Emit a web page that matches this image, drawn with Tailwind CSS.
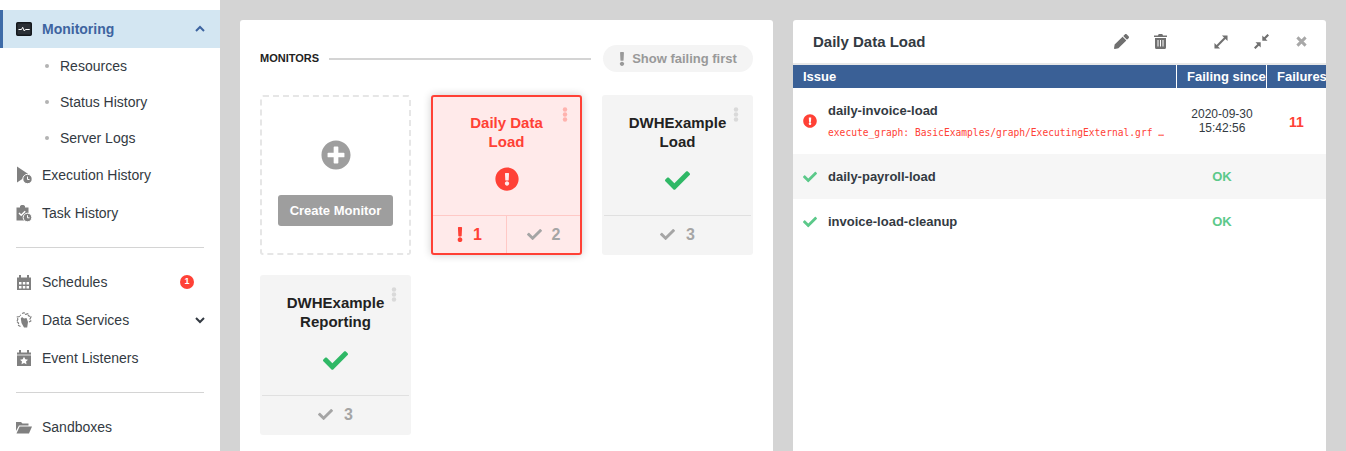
<!DOCTYPE html>
<html lang="en">
<head>
    <meta charset="UTF-8">
    <title>Monitoring</title>
    <script src="https://cdn.jsdelivr.net/npm/@tailwindcss/browser@4"></script>
</head>
<body class="overflow-hidden">
<div class="flex h-[451px] w-[1346px] overflow-hidden bg-[#d4d4d4] font-['Liberation_Sans',Arial,sans-serif] text-[14px] text-[#333a42]">

    <!-- Sidebar -->
    <aside class="w-[220px] shrink-0 bg-white pt-[10px]">
        <div class="flex h-[38px] items-center border-l-[3px] border-[#3d6ba8] bg-[#d3e6f2] pl-[13px] pr-[15px]">
            <svg class="h-[14px] w-[16px] shrink-0" viewBox="0 0 16 14"><rect x="0.75" y="0.75" width="14.5" height="12.5" rx="1" fill="#2b3036" stroke="#14181d" stroke-width="1.5"/><path d="M2.5 7.500h3l1.200-2.200 1.600 3.700 1.200-1.500h4.200" fill="none" stroke="#fff" stroke-width="1"/></svg>
            <span class="ml-[10px] font-bold text-[#3d64a0]">Monitoring</span>
            <svg class="ml-auto h-[10px] w-[10px]" viewBox="0 0 10 10"><path d="M1 7l4-4 4 4" fill="none" stroke="#3d64a0" stroke-width="2"/></svg>
        </div>
        <div class="flex h-[36px] items-center pl-[45px]"><span class="h-[4px] w-[4px] rounded-full bg-[#b3b3b3]"></span><span class="ml-[11px]">Resources</span></div>
        <div class="flex h-[36px] items-center pl-[45px]"><span class="h-[4px] w-[4px] rounded-full bg-[#b3b3b3]"></span><span class="ml-[11px]">Status History</span></div>
        <div class="flex h-[36px] items-center pl-[45px]"><span class="h-[4px] w-[4px] rounded-full bg-[#b3b3b3]"></span><span class="ml-[11px]">Server Logs</span></div>
        <div class="flex h-[38px] items-center pl-[16px]">
            <svg class="h-[18px] w-[16px] shrink-0" viewBox="0 0 16 18"><path d="M1 0.500l12 8-12 8z" fill="#808080"/><circle cx="11.500" cy="13" r="4.700" fill="#808080" stroke="#fff"/><path d="M11.500 10.500v3h2" fill="none" stroke="#fff"/></svg>
            <span class="ml-[10px]">Execution History</span>
        </div>
        <div class="flex h-[38px] items-center pl-[16px]">
            <svg class="h-[17px] w-[16px] shrink-0" viewBox="0 0 16 17"><path d="M0.500 2.500h3.500V1l1.500-1h2l1.500 1v1.500h3.500v13h-12z" fill="#808080"/><path d="M3 8l2.200 2.200 4-4" fill="none" stroke="#fff" stroke-width="1.500"/><circle cx="11.500" cy="12.500" r="4.300" fill="#808080" stroke="#fff"/><path d="M11.500 10.200v2.600h2" fill="none" stroke="#fff"/></svg>
            <span class="ml-[10px]">Task History</span>
        </div>
        <div class="mx-[16px] mb-[15px] mt-[15px] h-px bg-[#d4d4d4]"></div>
        <div class="flex h-[38px] items-center pl-[17px] pr-[26px]">
            <svg class="h-[15px] w-[14px] shrink-0" viewBox="0 0 14 15"><path d="M0 2.500h14V15H0z" fill="#808080"/><path d="M3 0v3M11 0v3" stroke="#808080" stroke-width="2"/><path d="M2 7h2.500v2.500H2zM5.800 7h2.500v2.500H5.800zM9.500 7h2.500v2.500H9.500zM2 11h2.500v2.500H2zM5.800 11h2.500v2.500H5.800zM9.500 11h2.500v2.500H9.500z" fill="#fff"/></svg>
            <span class="ml-[11px]">Schedules</span>
            <span class="ml-auto flex h-[14px] w-[14px] items-center justify-center rounded-full bg-[#ff4136] text-[9px] font-bold text-white">1</span>
        </div>
        <div class="flex h-[38px] items-center pl-[16px] pr-[15px]">
            <svg class="h-[16px] w-[16px] shrink-0" viewBox="0 0 16 16"><path d="M6 1.500L8 .8l1.500 1.500 2.300-.5.700 2 2.500 1-1 2.200.8 2-1.800 1M4.500 14.500l-2-1V11L.8 9.500l1-2-.5-2.500 2.200-.5L4.800 2.800" fill="none" stroke="#808080" stroke-width="1.200" stroke-dasharray="3 .8"/><path d="M4.800 6.500L6 5l2 1.500 2.500-.5 1.500 4-.8 5.500H8L5.500 11z" fill="#808080"/></svg>
            <span class="ml-[10px]">Data Services</span>
            <svg class="ml-auto h-[10px] w-[10px]" viewBox="0 0 10 10"><path d="M1 3l4 4 4-4" fill="none" stroke="#333a42" stroke-width="2"/></svg>
        </div>
        <div class="flex h-[38px] items-center pl-[17px]">
            <svg class="h-[16px] w-[14px] shrink-0" viewBox="0 0 14 16"><path d="M0 2.500h14V16H0z" fill="#808080"/><path d="M3 0v3M11 0v3" stroke="#808080" stroke-width="2"/><path d="M0 5h14" stroke="#fff" stroke-width=".8"/><path d="M7 6.800l1.300 2.500 2.700.4-2 1.900.5 2.700L7 13l-2.500 1.300.5-2.700-2-1.900 2.700-.4z" fill="#fff"/></svg>
            <span class="ml-[11px]">Event Listeners</span>
        </div>
        <div class="mx-[16px] mb-[15px] mt-[15px] h-px bg-[#d4d4d4]"></div>
        <div class="flex h-[38px] items-center pl-[16px]">
            <svg class="h-[13px] w-[16px] shrink-0" viewBox="0 0 16 13"><path d="M0 1h5l1.500 1.500h6V4.500H3L0 10z" fill="#808080"/><path d="M3.600 5.500H16l-3 7H0.500z" fill="#808080"/></svg>
            <span class="ml-[10px]">Sandboxes</span>
        </div>
    </aside>

    <!-- Monitors -->
    <main class="ml-[20px] mt-[20px] h-[500px] w-[533px] shrink-0 rounded-t-[3px] bg-white px-[20px] pt-[25px]">
        <div class="flex h-[27px] items-center">
            <span class="text-[11px] font-bold leading-none text-[#222]">MONITORS</span>
            <span class="ml-[10px] h-[2px] w-[262px] bg-[#d4d4d4]"></span>
            <span class="ml-auto flex h-[27px] w-[150px] items-center justify-center rounded-full bg-[#f4f4f4] text-[13px] font-bold text-[#999]">
                <svg class="h-[14px] w-[6px]" viewBox="0 0 192 512"><path fill="#999" d="M176 432c0 44.112-35.888 80-80 80s-80-35.888-80-80 35.888-80 80-80 80 35.888 80 80zM25.260 25.199l13.600 272C39.499 309.972 50.041 320 62.830 320h66.340c12.789 0 23.331-10.028 23.970-22.801l13.600-272C167.425 11.490 156.496 0 142.770 0H49.230C35.504 0 24.575 11.490 25.260 25.199z"/></svg>
                <span class="ml-[7px]">Show failing first</span>
            </span>
        </div>

        <div class="mt-[23px] grid grid-cols-[151px_151px_151px] gap-[20px]">
            <!-- create -->
            <div class="flex h-[160px] flex-col items-center rounded-[3px] border-2 border-dashed border-[#e6e6e6] pt-[43px]">
                <svg class="h-[30px] w-[30px]" viewBox="0 0 512 512"><path fill="#9e9e9e" d="M256 8C119 8 8 119 8 256s111 248 248 248 248-111 248-248S393 8 256 8zm144 276c0 6.600-5.400 12-12 12h-92v92c0 6.600-5.400 12-12 12h-56c-6.600 0-12-5.400-12-12v-92h-92c-6.600 0-12-5.400-12-12v-56c0-6.600 5.400-12 12-12h92v-92c0-6.600 5.400-12 12-12h56c6.600 0 12 5.400 12 12v92h92c6.600 0 12 5.400 12 12v56z"/></svg>
                <span class="mt-[25px] flex h-[31px] w-[115px] items-center justify-center rounded-[3px] bg-[#9e9e9e] text-[13px] font-bold text-white">Create Monitor</span>
            </div>

            <!-- failing -->
            <div class="relative flex h-[160px] flex-col rounded-[3px] border-2 border-[#ff4136] bg-[#ffeaea] shadow-[0_0_8px_rgba(0,0,0,0.2)]">
                <svg class="absolute right-[12px] top-[10px] h-[15px] w-[6px]" viewBox="0 0 6 15"><circle cx="3" cy="2.500" r="2.200" fill="#ffb3ae"/><circle cx="3" cy="7.500" r="2.200" fill="#ffb3ae"/><circle cx="3" cy="12.500" r="2.200" fill="#ffb3ae"/></svg>
                <div class="mt-[16px] text-center text-[15px] font-bold leading-[19px] text-[#ff4136]">Daily Data<br>Load</div>
                <svg class="mx-auto mt-[16px] h-[24px] w-[24px]" viewBox="0 0 512 512"><path fill="#ff4136" d="M504 256c0 136.997-111.043 248-248 248S8 392.997 8 256C8 119.083 119.043 8 256 8s248 111.083 248 248zm-248 50c-25.405 0-46 20.595-46 46s20.595 46 46 46 46-20.595 46-46-20.595-46-46-46zm-43.673-165.346l7.418 136c.347 6.364 5.609 11.346 11.982 11.346h48.546c6.373 0 11.635-4.982 11.982-11.346l7.418-136c.375-6.874-5.098-12.654-11.982-12.654h-63.383c-6.884 0-12.356 5.780-11.981 12.654z"/></svg>
                <div class="mt-auto flex h-[38px] border-t border-[#ffc9c6] text-[16px] font-bold">
                    <div class="flex flex-1 items-center justify-center border-r border-[#ffc9c6] text-[#ff4136]">
                        <svg class="h-[15px] w-[6px]" viewBox="0 0 192 512"><path fill="#ff4136" d="M176 432c0 44.112-35.888 80-80 80s-80-35.888-80-80 35.888-80 80-80 80 35.888 80 80zM25.260 25.199l13.600 272C39.499 309.972 50.041 320 62.830 320h66.340c12.789 0 23.331-10.028 23.970-22.801l13.600-272C167.425 11.490 156.496 0 142.770 0H49.230C35.504 0 24.575 11.490 25.260 25.199z"/></svg>
                        <span class="ml-[10px]">1</span>
                    </div>
                    <div class="flex flex-1 items-center justify-center text-[#a5a5a5]">
                        <svg class="h-[15px] w-[15px]" viewBox="0 0 512 512"><path fill="#a5a5a5" d="M173.898 439.404l-166.400-166.400c-9.997-9.997-9.997-26.206 0-36.204l36.203-36.204c9.997-9.998 26.207-9.998 36.204 0L192 312.690 432.095 72.596c9.997-9.997 26.207-9.997 36.204 0l36.203 36.204c9.997 9.997 9.997 26.206 0 36.204l-294.400 294.401c-9.998 9.997-26.207 9.997-36.204-.001z"/></svg>
                        <span class="ml-[10px]">2</span>
                    </div>
                </div>
            </div>

            <!-- ok -->
            <div class="relative flex h-[160px] flex-col rounded-[3px] bg-[#f4f4f4] px-[2px] pb-[2px]">
                <svg class="absolute right-[14px] top-[12px] h-[15px] w-[6px]" viewBox="0 0 6 15"><circle cx="3" cy="2.500" r="2.200" fill="#d9d9d9"/><circle cx="3" cy="7.500" r="2.200" fill="#d9d9d9"/><circle cx="3" cy="12.500" r="2.200" fill="#d9d9d9"/></svg>
                <div class="mt-[18px] text-center text-[15px] font-bold leading-[19px] text-[#222]">DWHExample<br>Load</div>
                <svg class="mx-auto mt-[17px] h-[25px] w-[25px]" viewBox="0 0 512 512"><path fill="#2fb866" d="M173.898 439.404l-166.400-166.400c-9.997-9.997-9.997-26.206 0-36.204l36.203-36.204c9.997-9.998 26.207-9.998 36.204 0L192 312.690 432.095 72.596c9.997-9.997 26.207-9.997 36.204 0l36.203 36.204c9.997 9.997 9.997 26.206 0 36.204l-294.400 294.401c-9.998 9.997-26.207 9.997-36.204-.001z"/></svg>
                <div class="mt-auto flex h-[38px] items-center justify-center border-t border-[#e0e0e0] text-[16px] font-bold text-[#a5a5a5]">
                    <svg class="h-[15px] w-[15px]" viewBox="0 0 512 512"><path fill="#a5a5a5" d="M173.898 439.404l-166.400-166.400c-9.997-9.997-9.997-26.206 0-36.204l36.203-36.204c9.997-9.998 26.207-9.998 36.204 0L192 312.690 432.095 72.596c9.997-9.997 26.207-9.997 36.204 0l36.203 36.204c9.997 9.997 9.997 26.206 0 36.204l-294.400 294.401c-9.998 9.997-26.207 9.997-36.204-.001z"/></svg>
                    <span class="ml-[11px]">3</span>
                </div>
            </div>

            <div class="relative flex h-[160px] flex-col rounded-[3px] bg-[#f4f4f4] px-[2px] pb-[2px]">
                <svg class="absolute right-[14px] top-[12px] h-[15px] w-[6px]" viewBox="0 0 6 15"><circle cx="3" cy="2.500" r="2.200" fill="#d9d9d9"/><circle cx="3" cy="7.500" r="2.200" fill="#d9d9d9"/><circle cx="3" cy="12.500" r="2.200" fill="#d9d9d9"/></svg>
                <div class="mt-[18px] text-center text-[15px] font-bold leading-[19px] text-[#222]">DWHExample<br>Reporting</div>
                <svg class="mx-auto mt-[17px] h-[25px] w-[25px]" viewBox="0 0 512 512"><path fill="#2fb866" d="M173.898 439.404l-166.400-166.400c-9.997-9.997-9.997-26.206 0-36.204l36.203-36.204c9.997-9.998 26.207-9.998 36.204 0L192 312.690 432.095 72.596c9.997-9.997 26.207-9.997 36.204 0l36.203 36.204c9.997 9.997 9.997 26.206 0 36.204l-294.400 294.401c-9.998 9.997-26.207 9.997-36.204-.001z"/></svg>
                <div class="mt-auto flex h-[38px] items-center justify-center border-t border-[#e0e0e0] text-[16px] font-bold text-[#a5a5a5]">
                    <svg class="h-[15px] w-[15px]" viewBox="0 0 512 512"><path fill="#a5a5a5" d="M173.898 439.404l-166.400-166.400c-9.997-9.997-9.997-26.206 0-36.204l36.203-36.204c9.997-9.998 26.207-9.998 36.204 0L192 312.690 432.095 72.596c9.997-9.997 26.207-9.997 36.204 0l36.203 36.204c9.997 9.997 9.997 26.206 0 36.204l-294.400 294.401c-9.998 9.997-26.207 9.997-36.204-.001z"/></svg>
                    <span class="ml-[11px]">3</span>
                </div>
            </div>
        </div>
    </main>

    <!-- Detail -->
    <section class="ml-[20px] mt-[20px] h-[500px] w-[533px] shrink-0 overflow-hidden rounded-t-[3px] bg-white">
        <div class="flex h-[43px] items-center pl-[20px]">
            <span class="mt-[2px] text-[15px] font-bold text-[#333a42]">Daily Data Load</span>
            <svg class="ml-[188px] h-[15px] w-[15px]" viewBox="0 0 512 512"><path fill="#707070" d="M497.900 142.100l-46.100 46.100c-4.700 4.700-12.300 4.700-17 0l-111-111c-4.700-4.700-4.700-12.300 0-17l46.100-46.100c18.700-18.700 49.100-18.700 67.900 0l60.100 60.100c18.800 18.700 18.800 49.100 0 67.900zM284.200 99.800L21.600 362.400.4 483.900c-2.900 16.400 11.400 30.600 27.800 27.800l121.500-21.300 262.600-262.600c4.700-4.700 4.700-12.300 0-17l-111-111c-4.800-4.700-12.400-4.700-17.100 0z"/></svg>
            <svg class="ml-[25px] h-[15px] w-[13px]" viewBox="0 0 13 15"><path d="M0 1.500h4L4.700 0h3.600L9 1.500h4V3H0zM1 4h11v9.500a1.500 1.500 0 0 1-1.500 1.500h-8A1.500 1.500 0 0 1 1 13.500z" fill="#707070"/><path d="M4 6v6.500M6.500 6v6.500M9 6v6.500" stroke="#fff" stroke-width="1"/></svg>
            <svg class="ml-[47px] h-[14px] w-[14px]" viewBox="0 0 15 15"><path d="M14.500 .5H8.500l6 6zM.5 14.500h6l-6-6z" fill="#707070"/><path d="M3 12L12 3" stroke="#707070" stroke-width="2.200"/></svg>
            <svg class="ml-[26px] h-[15px] w-[15px]" viewBox="0 0 15 15"><path d="M8.300 1.500v5.200h5.200zM6.700 13.500V8.300H1.500z" fill="#707070"/><path d="M10 5L14.300 .7M5 10L.7 14.300" stroke="#707070" stroke-width="2.200"/></svg>
            <svg class="ml-[27px] h-[11px] w-[11px]" viewBox="0 0 12 12"><path d="M1.500 1.500l9 9M10.500 1.500l-9 9" stroke="#a8a8a8" stroke-width="3.200"/></svg>
        </div>
        <div class="h-[2px] bg-[#e8e8e8]"></div>
        <div class="grid grid-cols-[383px_90px_60px] bg-[#3a6096] text-[13px] font-bold leading-[23px] text-white">
            <div class="pl-[10px]">Issue</div>
            <div class="border-l border-white pl-[10px] whitespace-nowrap">Failing since</div>
            <div class="overflow-hidden border-l border-white pl-[10px] whitespace-nowrap">Failures</div>
        </div>
        <div class="grid h-[66px] grid-cols-[384px_90px_59px] items-center">
            <div class="flex items-center pl-[10px]">
                <svg class="h-[14px] w-[14px] shrink-0" viewBox="0 0 512 512"><path fill="#ff4136" d="M504 256c0 136.997-111.043 248-248 248S8 392.997 8 256C8 119.083 119.043 8 256 8s248 111.083 248 248zm-248 50c-25.405 0-46 20.595-46 46s20.595 46 46 46 46-20.595 46-46-20.595-46-46-46zm-43.673-165.346l7.418 136c.347 6.364 5.609 11.346 11.982 11.346h48.546c6.373 0 11.635-4.982 11.982-11.346l7.418-136c.375-6.874-5.098-12.654-11.982-12.654h-63.383c-6.884 0-12.356 5.780-11.981 12.654z"/></svg>
                <div class="ml-[11px] min-w-0 flex-1">
                    <div class="text-[13px] font-bold leading-[18px]">daily-invoice-load</div>
                    <div class="mt-[6px] whitespace-nowrap font-['DejaVu_Sans_Mono',monospace] text-[9.65px] leading-[14px] text-[#ff4136]">execute_graph: BasicExamples/graph/ExecutingExternal.grf …</div>
                </div>
            </div>
            <div class="text-center text-[12px] leading-[14px]">2020-09-30<br>15:42:56</div>
            <div class="mt-[2px] text-center text-[14px] font-bold text-[#ff4136]">11</div>
        </div>
        <div class="grid h-[45px] grid-cols-[384px_90px_59px] items-center bg-[#f6f6f6]">
            <div class="flex items-center pl-[10px]">
                <svg class="h-[14px] w-[14px] shrink-0" viewBox="0 0 512 512"><path fill="#5cc98a" d="M173.898 439.404l-166.400-166.400c-9.997-9.997-9.997-26.206 0-36.204l36.203-36.204c9.997-9.998 26.207-9.998 36.204 0L192 312.690 432.095 72.596c9.997-9.997 26.207-9.997 36.204 0l36.203 36.204c9.997 9.997 9.997 26.206 0 36.204l-294.400 294.401c-9.998 9.997-26.207 9.997-36.204-.001z"/></svg>
                <span class="ml-[11px] text-[13px] font-bold">daily-payroll-load</span>
            </div>
            <div class="text-center font-bold text-[13px] text-[#5cc98a]">OK</div>
            <div></div>
        </div>
        <div class="grid h-[45px] grid-cols-[384px_90px_59px] items-center">
            <div class="flex items-center pl-[10px]">
                <svg class="h-[14px] w-[14px] shrink-0" viewBox="0 0 512 512"><path fill="#5cc98a" d="M173.898 439.404l-166.400-166.400c-9.997-9.997-9.997-26.206 0-36.204l36.203-36.204c9.997-9.998 26.207-9.998 36.204 0L192 312.690 432.095 72.596c9.997-9.997 26.207-9.997 36.204 0l36.203 36.204c9.997 9.997 9.997 26.206 0 36.204l-294.400 294.401c-9.998 9.997-26.207 9.997-36.204-.001z"/></svg>
                <span class="ml-[11px] text-[13px] font-bold">invoice-load-cleanup</span>
            </div>
            <div class="text-center font-bold text-[13px] text-[#5cc98a]">OK</div>
            <div></div>
        </div>
    </section>
</div>
</body>
</html>
